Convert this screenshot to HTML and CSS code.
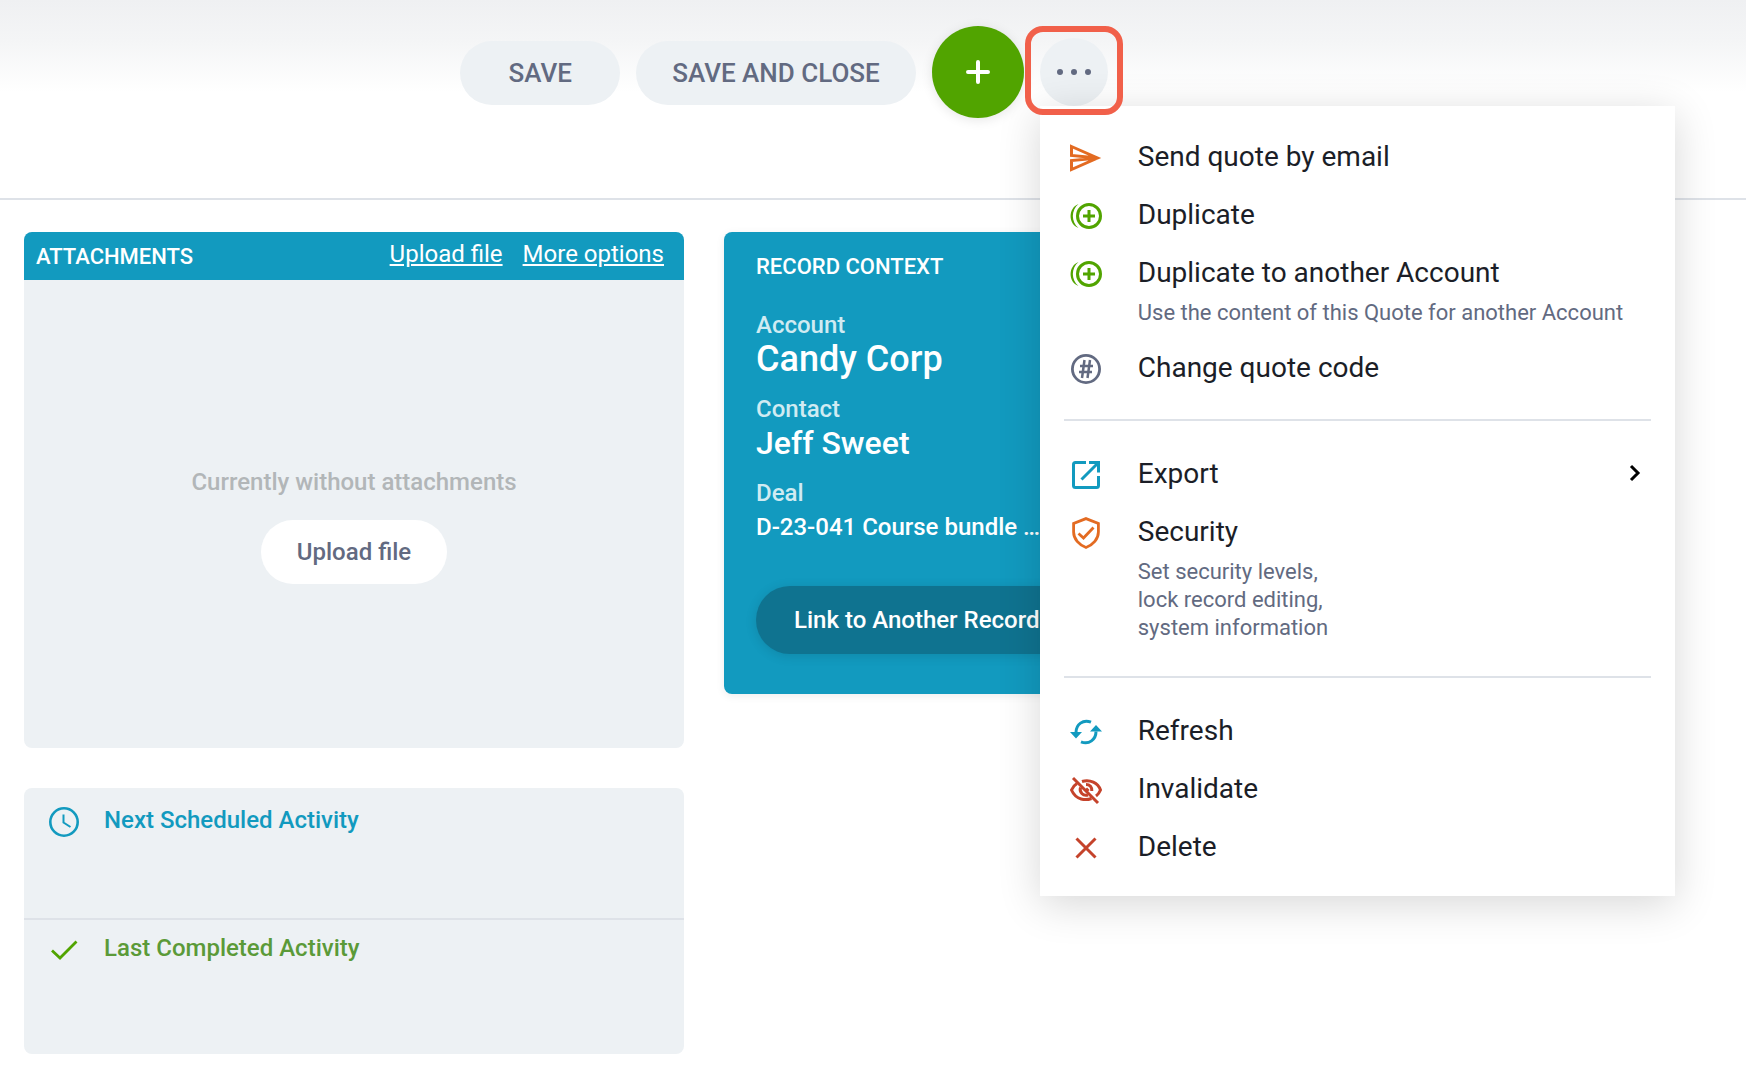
FILE: index.html
```html
<!DOCTYPE html>
<html lang="en">
<head>
    <meta charset="UTF-8">
    <meta name="viewport" content="width=device-width, initial-scale=1.0">
    <title>Quote</title>
    <link rel="stylesheet" href="styles.css">
</head>
<body>
    <header class="toolbar">
        <button class="btn btn-toolbar">SAVE</button>
        <button class="btn btn-toolbar">SAVE AND CLOSE</button>
        <button class="btn-add" aria-label="Add">
            <svg width="24" height="24" viewBox="0 0 24 24" fill="none" stroke="currentColor" stroke-width="4" stroke-linecap="round">
                <path d="M12 2v20M2 12h20"/>
            </svg>
        </button>
        <div class="more">
            <button class="btn-more" aria-label="More actions">
                <svg width="36" height="8" viewBox="0 0 36 8" fill="currentColor">
                    <circle cx="4" cy="4" r="3"/>
                    <circle cx="18" cy="4" r="3"/>
                    <circle cx="32" cy="4" r="3"/>
                </svg>
            </button>
            <div class="highlight"></div>

            <nav class="menu">
                <div class="menu-section">
                    <button class="menu-item">
                        <svg class="icon orange" viewBox="0 0 36 36" fill="none" stroke="currentColor" stroke-width="3">
                            <path d="M3.5 6.5L29.500 18L3.500 29.500V20.500L30 18L3.500 15.500Z"/>
                        </svg>
                        <span class="menu-text">
                            <span class="menu-title">Send quote by email</span>
                        </span>
                    </button>
                    <button class="menu-item">
                        <svg class="icon green" viewBox="0 0 36 36" fill="none" stroke="currentColor">
                            <circle cx="21" cy="18" r="11.500" stroke-width="3"/>
                            <path d="M21 12v12M15 18h12" stroke-width="3"/>
                            <path d="M10.500 6C0 10 0 26 10.500 30C3 24 3 12 10.500 6Z" fill="currentColor" stroke="none"/>
                        </svg>
                        <span class="menu-text">
                            <span class="menu-title">Duplicate</span>
                        </span>
                    </button>
                    <button class="menu-item">
                        <svg class="icon green" viewBox="0 0 36 36" fill="none" stroke="currentColor">
                            <circle cx="21" cy="18" r="11.500" stroke-width="3"/>
                            <path d="M21 12v12M15 18h12" stroke-width="3"/>
                            <path d="M10.500 6C0 10 0 26 10.500 30C3 24 3 12 10.500 6Z" fill="currentColor" stroke="none"/>
                        </svg>
                        <span class="menu-text">
                            <span class="menu-title">Duplicate to another Account</span>
                            <span class="menu-note">Use the content of this Quote for another Account</span>
                        </span>
                    </button>
                    <button class="menu-item">
                        <svg class="icon gray" viewBox="0 0 36 36" fill="none" stroke="currentColor">
                            <circle cx="18" cy="18" r="13.600" stroke-width="2.800"/>
                            <path d="M16.500 9L14 27M22 9L19.500 27M12 15h13M11 21h13" stroke-width="2.500"/>
                        </svg>
                        <span class="menu-text">
                            <span class="menu-title">Change quote code</span>
                        </span>
                    </button>
                </div>

                <div class="menu-section">
                    <button class="menu-item">
                        <svg class="icon blue" viewBox="0 0 36 36" fill="none" stroke="currentColor" stroke-width="3">
                            <path d="M18 5.500H7.500Q5.500 5.500 5.500 7.500V28.500Q5.500 30.500 7.500 30.500H28.500Q30.500 30.500 30.500 28.500V19"/>
                            <path d="M21 5.500H30.500V15.500M30 6L13.500 22.500" />
                        </svg>
                        <span class="menu-text">
                            <span class="menu-title">Export</span>
                        </span>
                        <svg class="chevron" width="16" height="20" viewBox="0 0 16 20" fill="none" stroke="currentColor" stroke-width="3">
                            <path d="M4 3L11 10L4 17"/>
                        </svg>
                    </button>
                    <button class="menu-item">
                        <svg class="icon orange" viewBox="0 0 36 36" fill="none" stroke="currentColor" stroke-width="2.800">
                            <path d="M18 3.600L30.400 8.500V17C30.400 24 25 30 18 32.500C11 30 5.600 24 5.600 17V8.500Z"/>
                            <path d="M10.500 18.500L15.500 23L25.500 12.500"/>
                        </svg>
                        <span class="menu-text">
                            <span class="menu-title">Security</span>
                            <span class="menu-note">Set security levels,<br>lock record editing,<br>system information</span>
                        </span>
                    </button>
                </div>

                <div class="menu-section">
                    <button class="menu-item">
                        <svg class="icon blue" viewBox="0 0 36 36" fill="none" stroke="currentColor" stroke-width="3">
                            <path d="M23 8.200C15 5 8 10.500 8 18.500M13 27.800C21 31 28 25.500 28 17.500"/>
                            <path d="M2 18h12l-6 6.500zM34 17.500H22l6-6.500z" fill="currentColor" stroke="none"/>
                        </svg>
                        <span class="menu-text">
                            <span class="menu-title">Refresh</span>
                        </span>
                    </button>
                    <button class="menu-item">
                        <svg class="icon red" viewBox="0 0 36 36" fill="none" stroke="currentColor" stroke-width="3">
                            <path d="M5 6L30 31"/>
                            <path d="M9 11.500C6.500 13 4.500 15.500 3.500 18C8 28.500 18 28.500 23.500 26.500M14 9.500C22 7 30 11 32.500 18C31.500 20.500 30 22.500 28 24"/>
                            <path d="M12.500 15.500C11 20 15 24.500 20 23M18 12.500C22 12.500 24 15 23.800 19M18 16.500L20.500 19"/>
                        </svg>
                        <span class="menu-text">
                            <span class="menu-title">Invalidate</span>
                        </span>
                    </button>
                    <button class="menu-item">
                        <svg class="icon red" viewBox="0 0 36 36" fill="none" stroke="currentColor" stroke-width="3">
                            <path d="M8.500 8.500L27.500 27.500M27.500 8.500L8.500 27.500"/>
                        </svg>
                        <span class="menu-text">
                            <span class="menu-title">Delete</span>
                        </span>
                    </button>
                </div>
            </nav>
        </div>
    </header>

    <main class="content">
        <div class="column">
            <section class="card">
                <div class="card-header">
                    <h2 class="card-title">ATTACHMENTS</h2>
                    <div class="card-links">
                        <a href="#">Upload file</a>
                        <a href="#">More options</a>
                    </div>
                </div>
                <div class="attachments-empty">
                    <p class="empty-text">Currently without attachments</p>
                    <button class="btn btn-upload">Upload file</button>
                </div>
            </section>

            <section class="card activities">
                <div class="activity next">
                    <svg class="icon blue" viewBox="0 0 36 36" fill="none" stroke="currentColor">
                        <circle cx="18" cy="18" r="13.700" stroke-width="2.600"/>
                        <path d="M17.500 10.500V18.500L24.500 23" stroke-width="2"/>
                    </svg>
                    <h3>Next Scheduled Activity</h3>
                </div>
                <div class="activity last">
                    <svg class="icon green" viewBox="0 0 36 36" fill="none" stroke="currentColor" stroke-width="2.800">
                        <path d="M6 18.500L14 26L30.500 9.500"/>
                    </svg>
                    <h3>Last Completed Activity</h3>
                </div>
            </section>
        </div>

        <div class="column">
            <section class="context">
                <h2 class="card-title">RECORD CONTEXT</h2>
                <dl class="context-list">
                    <div>
                        <dt>Account</dt>
                        <dd class="account">Candy Corp</dd>
                    </div>
                    <div>
                        <dt>Contact</dt>
                        <dd class="contact">Jeff Sweet</dd>
                    </div>
                    <div>
                        <dt>Deal</dt>
                        <dd>D-23-041 Course bundle …</dd>
                    </div>
                </dl>
                <button class="btn btn-link">Link to Another Record</button>
            </section>
        </div>
    </main>
</body>
</html>
```

FILE: styles.css
```css
* {
    box-sizing: border-box;
}
body {
    margin: 0;
    font-family: Roboto, "Liberation Sans", sans-serif;
    font-size: 24px;
    line-height: 28px;
    color: #1b1e27;
    background-color: #fff;
}
h2, h3, p, dl, dd {
    margin: 0;
}
button {
    font: inherit;
    color: inherit;
    border: none;
    cursor: pointer;
}

/* Toolbar */
.toolbar {
    display: flex;
    justify-content: center;
    align-items: flex-start;
    gap: 16px;
    height: 200px;
    padding: 26px 178px 0 0;
    border-bottom: 2px solid #dee2e8;
    background: linear-gradient(#eff0f2, #f4f5f6 40px, #fff 92px);
}
.btn {
    height: 64px;
    padding: 0 36px;
    border-radius: 32px;
    font-weight: 500;
    color: #626a81;
    white-space: nowrap;
}
.btn-toolbar {
    min-width: 160px;
    margin-top: 15px;
    font-size: 26px;
    background-color: #edf1f4;
}
.btn-add {
    display: flex;
    justify-content: center;
    align-items: center;
    width: 92px;
    height: 92px;
    border-radius: 50%;
    color: #fff;
    background-color: #51a400;
    box-shadow: 0 2px 12px rgba(0, 0, 0, 0.1);
}
.more {
    position: relative;
    margin-top: 12px;
}
.btn-more {
    display: flex;
    justify-content: center;
    align-items: center;
    width: 68px;
    height: 68px;
    padding: 0;
    border-radius: 50%;
    color: #626a81;
    background-color: #edf1f4;
}
.highlight {
    position: absolute;
    top: -12px;
    left: -15px;
    z-index: 3;
    width: 98px;
    height: 89px;
    border: 6px solid #f1604a;
    border-radius: 18px;
    pointer-events: none;
}

/* Dropdown menu */
.menu {
    position: absolute;
    top: 68px;
    left: 0;
    z-index: 2;
    width: 635px;
    background-color: #fff;
    box-shadow: 0 8px 40px rgba(0, 0, 0, 0.16);
}
.menu-section {
    padding: 22px 0;
}
.menu-section + .menu-section::before {
    content: "";
    display: block;
    height: 2px;
    margin: 0 24px 24px;
    background-color: #dee2e8;
}
.menu-section + .menu-section {
    padding-top: 0;
}
.menu-section:last-child {
    padding-bottom: 20px;
}
.menu-item {
    display: flex;
    align-items: flex-start;
    gap: 34px;
    width: 100%;
    padding: 12px 28px;
    text-align: left;
    background: none;
}
.menu-item .icon {
    margin-bottom: -2px;
}
.menu-text {
    flex: 1;
}
.menu-title {
    display: block;
    font-size: 28px;
    line-height: 34px;
}
.menu-note {
    display: block;
    margin-top: 9px;
    font-size: 22px;
    color: #626a81;
}
.icon {
    flex: none;
    width: 36px;
    height: 36px;
}
.chevron {
    margin: 6px 4px 0 0;
    color: #000;
}
.orange {
    color: #e36b22;
}
.green {
    color: #51a400;
}
.blue {
    color: #129abf;
}
.gray {
    color: #626a81;
}
.red {
    color: #c5432b;
}

/* Cards */
.content {
    display: grid;
    grid-template-columns: repeat(2, minmax(0, 660px));
    gap: 40px;
    padding: 32px 24px 20px;
}
.column {
    display: flex;
    flex-direction: column;
    gap: 40px;
}
.card {
    border-radius: 8px;
    background-color: #edf1f4;
    overflow: hidden;
}
.card-header {
    display: flex;
    justify-content: space-between;
    align-items: center;
    height: 48px;
    padding: 0 20px 0 12px;
    color: #fff;
    background-color: #129abf;
}
.card-title {
    padding-top: 1px;
    font-size: 22px;
    font-weight: 500;
    line-height: 24px;
}
.card-links {
    display: flex;
    gap: 20px;
    padding-bottom: 4px;
}
.card-links a {
    color: #fff;
}
.attachments-empty {
    display: flex;
    flex-direction: column;
    justify-content: center;
    align-items: center;
    gap: 24px;
    min-height: 468px;
    padding-top: 24px;
}
.empty-text {
    font-weight: 500;
    color: #b2b6b8;
}
.btn-upload {
    background-color: #fff;
}
.activities {
    padding: 4px 0 6px;
}
.activity {
    display: flex;
    gap: 22px;
    min-height: 128px;
    padding: 12px 22px;
}
.activity h3 {
    padding-top: 2px;
    font-size: 24px;
    font-weight: 500;
}
.next {
    border-bottom: 2px solid #dee2e8;
}
.next h3 {
    color: #129abf;
}
.last h3 {
    color: #5b9a38;
}

/* Record context */
.context {
    padding: 22px 32px 40px;
    border-radius: 8px;
    color: #fff;
    background-color: #129abf;
    box-shadow: 0 2px 8px rgba(0, 0, 0, 0.08);
}
.context-list {
    display: flex;
    flex-direction: column;
    gap: 16px;
    margin: 32px 0 39px;
    font-weight: 500;
}
.context-list dt {
    color: #d0ebf2;
}
.context-list dd {
    line-height: 40px;
}
.context-list .account {
    font-size: 36px;
}
.context-list .contact {
    font-size: 32px;
}
.btn-link {
    height: 68px;
    padding: 0 38px;
    border-radius: 34px;
    color: #fff;
    background-color: #0f7390;
    box-shadow: 0 2px 12px rgba(0, 0, 0, 0.12);
}
```
